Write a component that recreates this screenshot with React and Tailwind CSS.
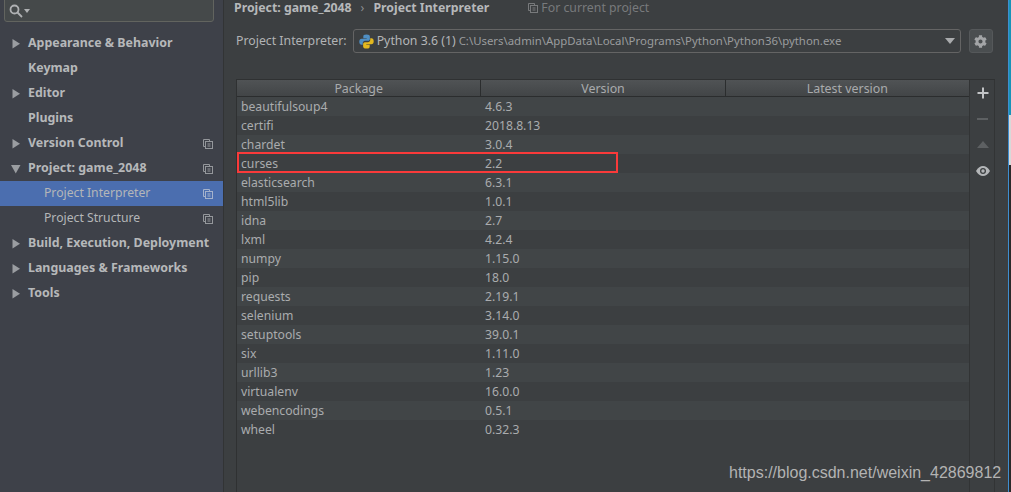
import { FaCog } from 'react-icons/fa';

const NAV = [
  { label: 'Appearance & Behavior', arrow: 'right' },
  { label: 'Keymap' },
  { label: 'Editor', arrow: 'right' },
  { label: 'Plugins' },
  { label: 'Version Control', arrow: 'right', copy: true },
  { label: 'Project: game_2048', arrow: 'down', copy: true },
  { label: 'Project Interpreter', child: true, copy: true, selected: true },
  { label: 'Project Structure', child: true, copy: true },
  { label: 'Build, Execution, Deployment', arrow: 'right' },
  { label: 'Languages & Frameworks', arrow: 'right' },
  { label: 'Tools', arrow: 'right' },
];

const PACKAGES = [
  ['beautifulsoup4', '4.6.3'],
  ['certifi', '2018.8.13'],
  ['chardet', '3.0.4'],
  ['curses', '2.2'],
  ['elasticsearch', '6.3.1'],
  ['html5lib', '1.0.1'],
  ['idna', '2.7'],
  ['lxml', '4.2.4'],
  ['numpy', '1.15.0'],
  ['pip', '18.0'],
  ['requests', '2.19.1'],
  ['selenium', '3.14.0'],
  ['setuptools', '39.0.1'],
  ['six', '1.11.0'],
  ['urllib3', '1.23'],
  ['virtualenv', '16.0.0'],
  ['webencodings', '0.5.1'],
  ['wheel', '0.32.3'],
];

function CopyIcon({ className }) {
  return (
    <svg width="10" height="10" viewBox="0 0 10 10" fill="none" stroke="currentColor" className={className}>
      <path d="M2.5 7.5H.5V.5h6v2" />
      <rect x="2.5" y="2.5" width="7" height="7" />
      <path d="M4.5 5h3M4.5 7h3" />
    </svg>
  );
}

function Arrow({ dir }) {
  if (dir === 'down') {
    return (
      <svg width="10" height="10" viewBox="0 0 10 10" className="text-[#9a9da1]">
        <path d="M0 1h9.5L4.75 9.5Z" fill="currentColor" />
      </svg>
    );
  }
  return (
    <svg width="10" height="10" viewBox="0 0 10 10" className="text-[#9a9da1]">
      <path d="M1.5 0v9.5L9 4.75Z" fill="currentColor" />
    </svg>
  );
}

function NavRow({ item }) {
  return (
    <div className={`flex h-[25px] items-center whitespace-nowrap pr-[10px] ${item.selected ? 'bg-[#4b6eaf]' : ''}`}>
      <div className="flex w-[28px] shrink-0 justify-start pl-[11px]">{item.arrow && <Arrow dir={item.arrow} />}</div>
      <span
        className={
          item.child
            ? 'ml-[16px] text-[12.2px] text-[#b4b6b8]'
            : 'text-[12.4px] font-bold text-[#b6b8ba]'
        }
      >
        {item.label}
      </span>
      {item.copy && <CopyIcon className={`ml-auto ${item.selected ? 'text-[#a4b2cc]' : 'text-[#94979b]'}`} />}
    </div>
  );
}

function PythonLogo() {
  return (
    <svg width="15" height="15" viewBox="0 0 16 16" className="shrink-0">
      <path d="M8 .5c-3 0-3.4 1-3.4 2.2V4.500H8.200v.6H2.800C1.300 5.100.3 6.200.3 8.200s1 3.300 2.400 3.300h1.300V9.700c0-1.300 1.100-2.400 2.400-2.400h3.300c1.100 0 1.900-.9 1.900-2V2.700C11.600 1.400 10.600.5 8 .5Z" fill="#4f8fc4" />
      <path d="M8 15.500c3 0 3.400-1 3.400-2.200V11.500H7.800v-.6h5.400c1.500 0 2.500-1.100 2.500-3.100s-1-3.300-2.400-3.300H12v1.800c0 1.300-1.100 2.400-2.400 2.400H6.300c-1.100 0-1.900.9-1.900 2v2.600c0 1.300 1 2.200 3.600 2.200Z" fill="#e3b81f" />
    </svg>
  );
}

function HeaderCell({ children, last }) {
  return (
    <div className={`flex h-full flex-1 items-center justify-center pt-[2px] text-[12.4px] text-[#a9abad] ${last ? '' : 'border-r border-[#2b2d2e]'}`}>
      {children}
    </div>
  );
}

export default function App() {
  return (
    <div
      className="relative flex h-[492px] w-[1011px] overflow-hidden bg-[#3c3f41] text-[12.3px]"
      style={{ fontFamily: '"Noto Sans", "Open Sans", sans-serif' }}
    >
      <aside className="flex w-[224px] shrink-0 flex-col border-r border-[#323435] bg-[#3e4149]">
        <div className="pl-[4px] pr-[9px]">
          <div className="-mt-px flex h-[23px] items-center gap-[1px] rounded-b-[3px] border border-[#62645f] bg-[#45494a] pl-[4px]">
            <svg width="14" height="14" viewBox="0 0 14 14" fill="none" stroke="#afb1b3" strokeWidth="1.800">
              <circle cx="5.500" cy="5.500" r="4" />
              <path d="M8.500 8.500 13 13" />
            </svg>
            <svg width="6" height="4" viewBox="0 0 6 4"><path d="M0 0h6L3 4Z" fill="#afb1b3" /></svg>
          </div>
        </div>
        <nav className="mt-[9px]">
          {NAV.map((item) => (
            <NavRow key={item.label} item={item} />
          ))}
        </nav>
      </aside>

      <main className="flex min-w-0 flex-1 flex-col pl-[12px] pr-[13px]">
        <div className="flex h-[16px] items-center whitespace-nowrap leading-[16px]">
          <span className="ml-[-2px] font-bold text-[#b6b8ba]">Project: game_2048</span>
          <span className="mx-[9px] text-[#8d8f91]">›</span>
          <span className="font-bold text-[#b6b8ba]">Project Interpreter</span>
          <span className="ml-[39px] flex items-center gap-[3px] text-[#787a7c]">
            <CopyIcon />
            For current project
          </span>
        </div>

        <div className="mt-[13px] flex h-[24px] items-center whitespace-nowrap">
          <span className="text-[#b1b3b5]">Project Interpreter:</span>
          <div className="ml-[6px] flex h-[24px] w-[608px] items-center gap-[3px] rounded-[3px] border border-[#646464] bg-[#3c3f41] pl-[5px] pr-[5px]">
            <PythonLogo />
            <span className="text-[#b4b6b8]">Python 3.6 (1)</span>
            <span className="text-[11.4px] text-[#9a9c9e]">C:\Users\admin\AppData\Local\Programs\Python\Python36\python.exe</span>
            <svg width="10" height="6" viewBox="0 0 10 6" className="ml-auto shrink-0">
              <path d="M0 0h10L5 6Z" fill="#a9abad" />
            </svg>
          </div>
          <button className="ml-[8px] grid h-[24px] w-[24px] place-items-center rounded-[3px] border border-[#55585a] bg-[#4a4e50] text-[#a3a5a7]">
            <FaCog size={13} />
          </button>
        </div>

        <div className="mt-[26px] flex min-h-0 flex-1 border-l border-t border-[#2f3132]">
          <div className="flex-1 border-r border-[#323435]">
            <div className="flex h-[17px] items-center border-b border-[#2b2d2e] bg-gradient-to-b from-[#505355] to-[#424547]">
              <HeaderCell>Package</HeaderCell>
              <HeaderCell>Version</HeaderCell>
              <HeaderCell last>Latest version</HeaderCell>
            </div>
            {PACKAGES.map(([name, version], i) => (
              <div
                key={name}
                className={`relative flex h-[19px] items-center pt-px text-[12.2px] text-[#aaacae] ${i % 2 === 0 ? 'bg-[#414547]' : 'bg-[#3c3f41]'}`}
              >
                <span className="w-[244px] pl-[4px]">{name}</span>
                <span className="pl-[4px]">{version}</span>
                {name === 'curses' && (
                  <div className="absolute left-0 top-[-2px] h-[21px] w-[381px] border-2 border-[#fa3a3a]" />
                )}
              </div>
            ))}
          </div>
          <div className="flex w-[25px] shrink-0 flex-col items-center border-r border-[#323435] pl-[1px] pt-[6px]">
            <svg width="12" height="12" viewBox="0 0 12 12" className="mt-[1px]"><path d="M5 .5h2v4.500h4.500v2H7v4.500H5V7H.5V5H5Z" fill="#c2c4c6" /></svg>
            <svg width="12" height="2" viewBox="0 0 12 2" className="mt-[19px]"><rect width="11" height="2" fill="#5d6062" /></svg>
            <svg width="12" height="7" viewBox="0 0 12 7" className="mt-[21px]"><path d="M0 7h12L6 0Z" fill="#5d6062" /></svg>
            <svg width="14" height="10" viewBox="0 0 14 10" className="mt-[18px]">
              <path d="M0 5c2-3.300 4.300-5 7-5s5 1.700 7 5c-2 3.300-4.300 5-7 5S2 8.300 0 5Z" fill="#b4b6b8" />
              <circle cx="7" cy="5" r="3" fill="#3c3f41" />
              <circle cx="7" cy="5" r="1.700" fill="#b4b6b8" />
            </svg>
          </div>
        </div>
      </main>

      <div className="flex w-[3px] shrink-0 flex-col border-l border-[#3f8ed0]">
        <div className="h-[115px] bg-[#1793b8]" />
        <div className="h-[50px] bg-[#d8d8d8]" />
        <div className="flex-1 bg-[#2a2a2a]" />
      </div>

      <span
        className="absolute left-[729px] top-[463px] text-[16px] leading-[20px] text-[#b3b3b3]"
        style={{ fontFamily: '"Liberation Sans", sans-serif' }}
      >
        https://blog.csdn.net/weixin_42869812
      </span>
    </div>
  );
}
